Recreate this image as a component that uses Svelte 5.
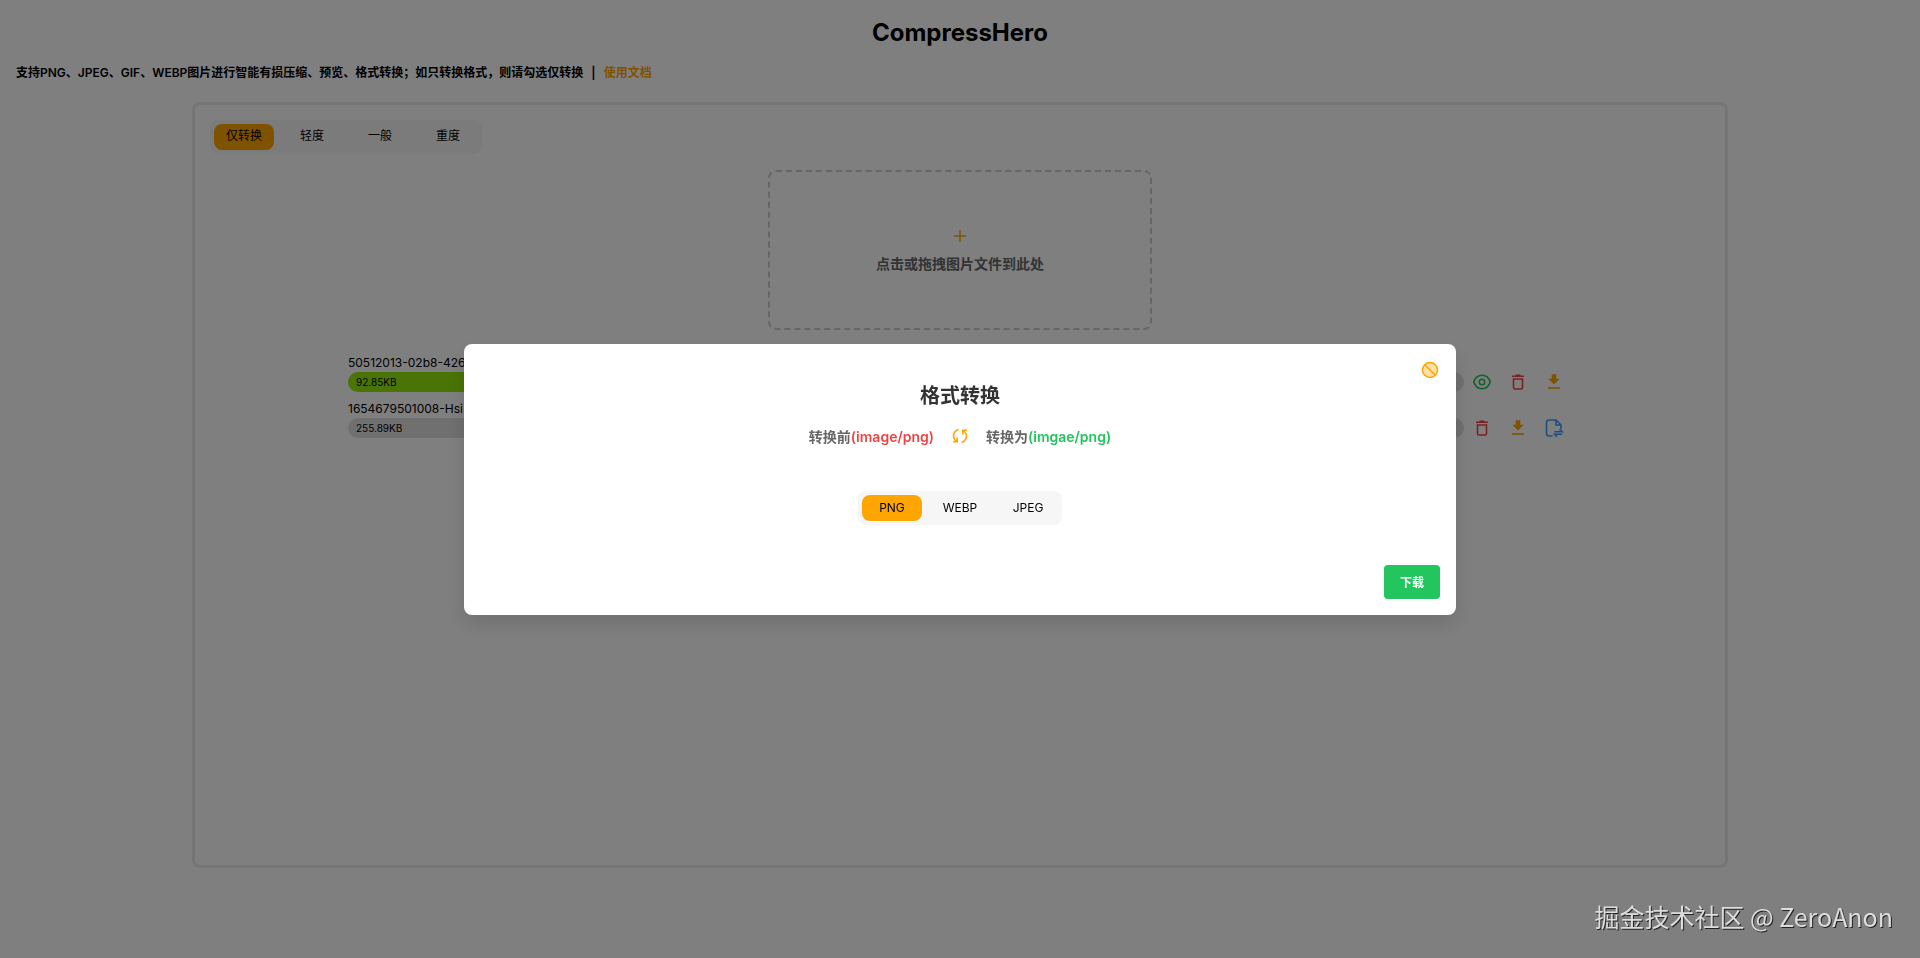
<script lang="ts">
  type Action = 'preview' | 'remove' | 'download' | 'convert';

  interface FileItem {
    name: string;
    size: string;
    percent: number;
    actions: Action[];
  }

  const levels = ['仅转换', '轻度', '一般', '重度'];
  const formats = ['PNG', 'WEBP', 'JPEG'];
  const titles: Record<Action, string> = {
    preview: '预览',
    remove: '删除',
    download: '下载',
    convert: '格式转换'
  };

  let level = $state('仅转换');
  let format = $state('PNG');
  let open = $state(true);
  let files = $state<FileItem[]>([
    { name: '50512013-02b8-426', size: '92.85KB', percent: 60, actions: ['preview', 'remove', 'download'] },
    { name: '1654679501008-Hsi', size: '255.89KB', percent: 0, actions: ['remove', 'download', 'convert'] }
  ]);

  function run(action: Action, file: FileItem) {
    if (action === 'remove') files = files.filter((f) => f !== file);
    if (action === 'convert') open = true;
  }
</script>

{#snippet icon(name: Action)}
  <svg class="icon icon--{name}" viewBox="0 0 18 18" aria-hidden="true">
    {#if name === 'preview'}
      <path d="M.8 9C2.200 4.500 5.200 2.300 9 2.300S15.800 4.500 17.200 9C15.800 13.500 12.800 15.700 9 15.700S2.200 13.500.8 9z" />
      <circle cx="9" cy="9" r="2.700" />
    {:else if name === 'remove'}
      <path d="M3 3.200h12M6.500 2.200h5M4.500 6h9v8.500q0 1.500-1.500 1.500H6q-1.500 0-1.500-1.500z" />
    {:else if name === 'download'}
      <path class="solid" d="M6.700 1.200h4.600v4.600h3.400L9 11.500 3.300 5.800h3.400z" />
      <path d="M3 15h12" />
    {:else}
      <path d="M7.500 17H4q-2.500 0-2.500-2.500v-11Q1.500 1 4 1h7l5 5v4M11 1v5h5" />
      <path d="M9.500 12.800H17l-2.500-2.500M17 15.200H9.500l2.500 2.500" />
    {/if}
  </svg>
{/snippet}

<div class="page">
  <h1>CompressHero</h1>
  <p class="intro">
    支持PNG、JPEG、GIF、WEBP图片进行智能有损压缩、预览、格式转换；如只转换格式，则请勾选仅转换<span class="sep">|</span><a href="#docs">使用文档</a>
  </p>

  <main class="panel">
    <div class="tabs">
      {#each levels as item}
        <button class="tab" class:active={level === item} onclick={() => (level = item)}>{item}</button>
      {/each}
    </div>

    <button class="drop">
      <svg class="plus" viewBox="0 0 12 12" aria-hidden="true"><path d="M6 0v12M0 6h12" /></svg>
      <span>点击或拖拽图片文件到此处</span>
    </button>

    <ul class="files">
      {#each files as file}
        <li>
          <div class="file-main">
            <div class="file-name">{file.name}</div>
            <div class="bar">
              <div class="bar-fill" style:width="{file.percent}%"></div>
              <span class="bar-text">{file.size}</span>
            </div>
          </div>
          <div class="actions">
            {#each file.actions as action}
              <button class="action" aria-label={titles[action]} onclick={() => run(action, file)}>
                {@render icon(action)}
              </button>
            {/each}
          </div>
        </li>
      {/each}
    </ul>
  </main>
</div>

{#if open}
  <div class="mask">
    <div class="modal" role="dialog" aria-modal="true" aria-labelledby="modal-title">
      <button class="close" aria-label="关闭" onclick={() => (open = false)}>
        <svg viewBox="0 0 18 18" aria-hidden="true">
          <circle cx="9" cy="9" r="7.500" />
          <path d="M3.700 3.700l10.600 10.600" />
        </svg>
      </button>
      <h2 id="modal-title">格式转换</h2>
      <div class="change">
        <span>转换前<b class="from">(image/png)</b></span>
        <svg class="swap" viewBox="0 0 16 16" aria-hidden="true">
          <path d="M6.500 1.500C1 3.200-.2 9.500 4.500 13.500M1 13.800h4.200V9.500" />
          <path d="M9.500 14.500c5.500-1.700 6.700-8 2-12M15 2.200h-4.200v4.300" />
        </svg>
        <span>转换为<b class="to">(imgae/png)</b></span>
      </div>
      <div class="tabs">
        {#each formats as item}
          <button class="tab" class:active={format === item} onclick={() => (format = item)}>{item}</button>
        {/each}
      </div>
      <button class="save">下载</button>
    </div>
  </div>
{/if}

<div class="watermark">掘金技术社区 @ ZeroAnon</div>

<style>
  :global(body) {
    margin: 0;
    background: #fff;
    color: #000;
    font-family: Inter, 'Noto Sans CJK SC', sans-serif;
    font-size: 12px;
  }

  button {
    margin: 0;
    padding: 0;
    border: 0;
    background: none;
    color: inherit;
    font: inherit;
    cursor: pointer;
  }

  .page {
    display: flex;
    flex-direction: column;
    min-height: 100vh;
    box-sizing: border-box;
    padding: 16px 0 90px;
  }

  h1 {
    margin: 0;
    font-size: 24px;
    font-weight: 700;
    line-height: 34px;
    text-align: center;
  }

  .intro {
    margin: 15px 16px 21px;
    font-weight: 600;
    line-height: 16px;
  }

  .intro a {
    color: orange;
    text-decoration: none;
  }

  .sep {
    margin: 0 8px;
  }

  .panel {
    flex: 1;
    display: flex;
    flex-direction: column;
    align-items: center;
    box-sizing: border-box;
    width: 80%;
    margin: 0 auto;
    padding: 15px;
    border: 3px solid #ebebeb;
    border-radius: 8px;
  }

  .tabs {
    display: flex;
    border-radius: 8px;
    background: #f6f6f6;
  }

  .panel > .tabs {
    align-self: flex-start;
  }

  .tab {
    width: 60px;
    height: 26px;
    margin: 4px;
    border-radius: 8px;
  }

  .panel .tab {
    line-height: 16px;
    padding-bottom: 2px;
  }

  .tab.active {
    background: orange;
  }

  .drop {
    display: flex;
    flex-direction: column;
    align-items: center;
    justify-content: center;
    gap: 12px;
    box-sizing: border-box;
    width: 384px;
    max-width: 100%;
    height: 160px;
    margin-top: 16px;
    padding-top: 4px;
    border: 2px dashed #ccc;
    border-radius: 8px;
    color: #666;
    font-size: 14px;
    font-weight: 600;
    line-height: 20px;
  }

  .plus {
    width: 12px;
    height: 12px;
    stroke: orange;
    stroke-width: 1.5;
  }

  .files {
    width: calc(80% + 24px);
    margin: 24px 0 0;
    padding: 0;
    list-style: none;
  }

  .files li {
    display: flex;
    align-items: flex-end;
    margin-bottom: 8px;
  }

  .file-main {
    flex: 1;
    min-width: 0;
  }

  .file-name {
    line-height: 18px;
  }

  .bar {
    position: relative;
    overflow: hidden;
    height: 20px;
    border-radius: 10px;
    background: #e0e0e0;
  }

  .bar-fill {
    height: 100%;
    background: #95e80c;
  }

  .bar-text {
    position: absolute;
    left: 8px;
    top: 0;
    font-size: 10px;
    line-height: 20px;
  }

  .actions {
    display: flex;
  }

  .action {
    width: 36px;
    height: 20px;
  }

  .icon {
    display: block;
    width: 18px;
    height: 18px;
    margin: 0 auto;
    overflow: visible;
    fill: none;
    stroke: currentColor;
    stroke-width: 1.6;
  }

  .icon .solid {
    fill: currentColor;
    stroke: none;
  }

  .icon--preview {
    color: #22c55e;
  }

  .icon--remove {
    color: #ef4444;
  }

  .icon--download {
    color: orange;
  }

  .icon--convert {
    color: #3b9cff;
  }

  .mask {
    position: fixed;
    inset: 0;
    display: flex;
    align-items: center;
    justify-content: center;
    background: rgba(0, 0, 0, 0.5);
  }

  .modal {
    position: relative;
    display: flex;
    flex-direction: column;
    align-items: center;
    box-sizing: border-box;
    width: 992px;
    max-width: calc(100% - 32px);
    padding: 36px 16px 16px;
    border-radius: 8px;
    background: #fff;
    box-shadow: 0 10px 20px rgba(0, 0, 0, 0.12);
  }

  .close {
    position: absolute;
    top: 17px;
    right: 17px;
  }

  .close svg {
    display: block;
    width: 18px;
    height: 18px;
    fill: #ffe0a8;
    stroke: orange;
    stroke-width: 1.5;
  }

  h2 {
    margin: 0;
    color: #333;
    font-size: 20px;
    font-weight: 700;
    line-height: 32px;
  }

  .change {
    display: flex;
    align-items: center;
    gap: 18px;
    margin: 14px 0 44px;
    color: #666;
    font-size: 14px;
    font-weight: 600;
    line-height: 21px;
  }

  .change b {
    font-weight: 600;
  }

  .from {
    color: #ef4444;
  }

  .to {
    color: #22c55e;
  }

  .swap {
    width: 16px;
    height: 16px;
    fill: none;
    stroke: orange;
    stroke-width: 1.6;
  }

  .save {
    align-self: flex-end;
    height: 34px;
    margin-top: 40px;
    padding: 0 16px;
    border-radius: 4px;
    background: #22c55e;
    color: #fff;
    font-weight: 700;
  }

  .watermark {
    position: fixed;
    right: 27px;
    bottom: 24px;
    color: #ddd;
    font-family: 'Noto Sans CJK SC', sans-serif;
    font-size: 25px;
    line-height: 36px;
    text-shadow: 1px 1px 0 #222;
  }
</style>
